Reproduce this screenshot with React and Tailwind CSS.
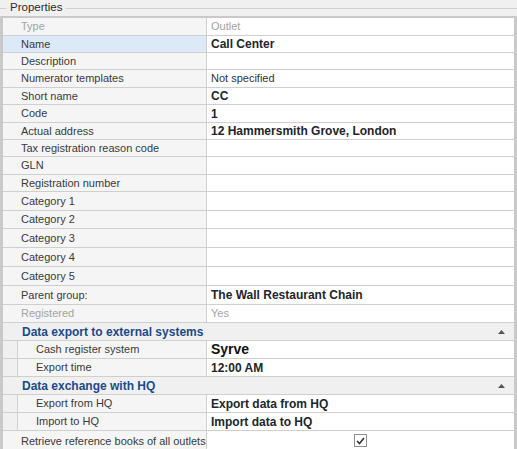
const rows = [
  { label: "Type", value: "Outlet", h: "h-[18px]", muted: true },
  { label: "Name", value: "Call Center", h: "h-[17px]", bold: true, selected: true },
  { label: "Description", value: "", h: "h-[17px]" },
  { label: "Numerator templates", value: "Not specified", h: "h-[18px]" },
  { label: "Short name", value: "CC", h: "h-[17px]", bold: true },
  { label: "Code", value: "1", h: "h-[18px]", bold: true },
  { label: "Actual address", value: "12 Hammersmith Grove, London", h: "h-[17px]", bold: true },
  { label: "Tax registration reason code", value: "", h: "h-[17px]" },
  { label: "GLN", value: "", h: "h-[18px]" },
  { label: "Registration number", value: "", h: "h-[17px]" },
  { label: "Category 1", value: "", h: "h-[19px]" },
  { label: "Category 2", value: "", h: "h-[18px]" },
  { label: "Category 3", value: "", h: "h-[19px]" },
  { label: "Category 4", value: "", h: "h-[19px]" },
  { label: "Category 5", value: "", h: "h-[19px]" },
  { label: "Parent group:", value: "The Wall Restaurant Chain", h: "h-[19px]", bold: true },
  { label: "Registered", value: "Yes", h: "h-[18px]", muted: true },
];

const groups = [
  {
    title: "Data export to external systems",
    items: [
      { label: "Cash register system", value: "Syrve", big: true },
      { label: "Export time", value: "12:00 AM", bold: true },
    ],
  },
  {
    title: "Data exchange with HQ",
    items: [
      { label: "Export from HQ", value: "Export data from HQ", bold: true },
      { label: "Import to HQ", value: "Import data to HQ", bold: true },
    ],
  },
];

function valueClass(r) {
  if (r.big) return "pl-[4px] text-[14px] font-bold text-[#111]";
  if (r.bold) return "pl-[4px] text-[12px] font-bold text-[#22252b]";
  if (r.muted) return "pl-[4px] text-[11px] text-[#a3a3a3]";
  return "pl-[4px] text-[11px] text-[#333]";
}

function Row({ r }) {
  return (
    <div className={`flex ${r.h} border-b border-[#cfcfcf]`}>
      <div
        className={`flex w-[204px] shrink-0 items-center border-r border-[#cfcfcf] pl-[18px] ${
          r.selected ? "bg-[#dce9f6]" : "bg-[#f5f5f5]"
        } ${r.muted ? "text-[#a3a3a3]" : "text-[#3a3a3a]"}`}
      >
        {r.label}
      </div>
      <div className={`flex flex-1 items-center bg-white ${valueClass(r)}`}>{r.value}</div>
    </div>
  );
}

function Group({ g }) {
  return (
    <div>
      <div className="flex h-[18px] items-center justify-between border-b border-[#cfcfcf] bg-[#f0f0f0] pl-[19px] pr-[9px]">
        <span className="text-[12px] font-bold text-[#1b4a8a]">{g.title}</span>
        <svg width="7" height="4" viewBox="0 0 7 4">
          <path d="M3.5 0 L7 4 L0 4 Z" fill="#555" />
        </svg>
      </div>
      {g.items.map((it) => (
        <div key={it.label} className="flex h-[18px]">
          <div className="w-[15px] shrink-0 border-b border-r border-[#cfcfcf] bg-[#f0f0f0]" />
          <div className="flex w-[189px] shrink-0 items-center border-b border-r border-[#cfcfcf] bg-[#f5f5f5] pl-[18px] text-[#3a3a3a]">
            {it.label}
          </div>
          <div className={`flex flex-1 items-center border-b border-[#cfcfcf] bg-white ${valueClass(it)}`}>
            {it.value}
          </div>
        </div>
      ))}
    </div>
  );
}

export default function App() {
  return (
    <div
      className="h-[449px] w-[517px] overflow-hidden bg-[#f0f0f0] text-[11px]"
      style={{ fontFamily: '"Liberation Sans", Arial, sans-serif' }}
    >
      <div className="flex h-[16px] items-center">
        <div className="h-px w-[6px] bg-[#d0d0d0]" />
        <span className="px-[4px] text-[11.5px] text-[#2b2b2b]">Properties</span>
        <div className="h-px flex-1 bg-[#d0d0d0]" />
      </div>
      <div className="border-x-[3px] border-t-[2px] border-[#c9c9c9] bg-white">
        {rows.map((r) => (
          <Row key={r.label} r={r} />
        ))}
        {groups.map((g) => (
          <Group key={g.title} g={g} />
        ))}
        <div className="flex h-[22px] border-b border-[#cfcfcf]">
          <div className="flex w-[204px] shrink-0 items-start border-r border-[#cfcfcf] bg-[#f5f5f5] pl-[18px] pt-[2px] text-[#3a3a3a]">
            Retrieve reference books of all outlets
          </div>
          <div className="flex flex-1 items-start justify-center bg-white pt-[3px]">
            <div className="flex h-[13px] w-[13px] items-center justify-center border border-[#8f8f8f] bg-white">
              <svg width="9" height="8" viewBox="0 0 9 8">
                <path d="M1 4 L3.5 6.5 L8 1" fill="none" stroke="#333" strokeWidth="1.6" />
              </svg>
            </div>
          </div>
        </div>
      </div>
    </div>
  );
}
